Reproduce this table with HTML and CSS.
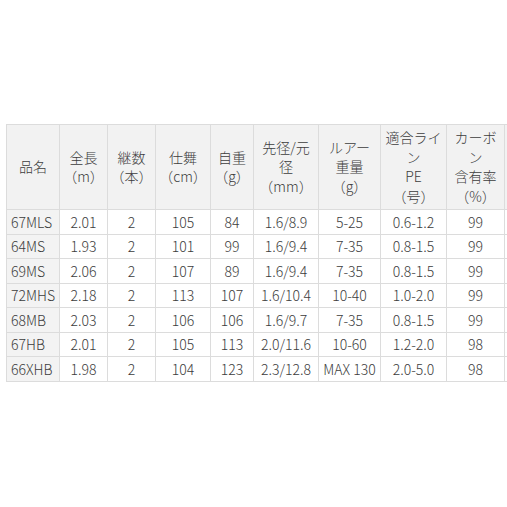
FILE: index.html
```html
<!DOCTYPE html>
<html lang="ja">
<head>
<meta charset="utf-8">
<link rel="stylesheet" href="styles.css">
</head>
<body>
<div class="wrap">
<table class="spec">
<colgroup>
<col class="c1"><col class="c2"><col class="c3"><col class="c4"><col class="c5"><col class="c6"><col class="c7"><col class="c8"><col class="c9"><col class="c10">
</colgroup>
<thead>
<tr>
<th>品名</th>
<th>全長<br>（m）</th>
<th>継数<br>（本）</th>
<th>仕舞<br>（cm）</th>
<th>自重<br>（g）</th>
<th>先径/元<br>径<br>（mm）</th>
<th>ルアー<br>重量<br>（g）</th>
<th>適合ライ<br>ン<br>PE<br>（号）</th>
<th>カーボ<br>ン<br>含有率<br>（%）</th>
<th></th>
</tr>
</thead>
<tbody>
<tr><th>67MLS</th><td>2.01</td><td>2</td><td>105</td><td>84</td><td>1.6/8.9</td><td>5-25</td><td>0.6-1.2</td><td>99</td><td></td></tr>
<tr><th>64MS</th><td>1.93</td><td>2</td><td>101</td><td>99</td><td>1.6/9.4</td><td>7-35</td><td>0.8-1.5</td><td>99</td><td></td></tr>
<tr><th>69MS</th><td>2.06</td><td>2</td><td>107</td><td>89</td><td>1.6/9.4</td><td>7-35</td><td>0.8-1.5</td><td>99</td><td></td></tr>
<tr><th>72MHS</th><td>2.18</td><td>2</td><td>113</td><td>107</td><td>1.6/10.4</td><td>10-40</td><td>1.0-2.0</td><td>99</td><td></td></tr>
<tr><th>68MB</th><td>2.03</td><td>2</td><td>106</td><td>106</td><td>1.6/9.7</td><td>7-35</td><td>0.8-1.5</td><td>99</td><td></td></tr>
<tr><th>67HB</th><td>2.01</td><td>2</td><td>105</td><td>113</td><td>2.0/11.6</td><td>10-60</td><td>1.2-2.0</td><td>98</td><td></td></tr>
<tr><th>66XHB</th><td>1.98</td><td>2</td><td>104</td><td>123</td><td>2.3/12.8</td><td>MAX 130</td><td>2.0-5.0</td><td>98</td><td></td></tr>
</tbody>
</table>
</div>
</body>
</html>
```
FILE: styles.css
```css
html, body {
  margin: 0;
  padding: 0;
  background: #ffffff;
  overflow: hidden;
}
.wrap {
  padding: 124px 0 0 6px;
  width: 600px;
}
.spec {
  border-collapse: collapse;
  table-layout: fixed;
  width: 558px;
  font-family: "Noto Sans CJK JP", "Noto Sans", sans-serif;
  font-size: 14px;
  font-weight: 300;
  color: #3c3c3c;
}
.c1 { width: 53px; }
.c2 { width: 48px; }
.c3 { width: 48px; }
.c4 { width: 55px; }
.c5 { width: 43px; }
.c6 { width: 65px; }
.c7 { width: 62px; }
.c8 { width: 66px; }
.c9 { width: 58px; }
.c10 { width: 60px; }
.spec th, .spec td {
  border: 1px solid #dcdcdc;
  padding: 0 2px;
  text-align: center;
  vertical-align: middle;
  font-weight: 300;
  white-space: nowrap;
  overflow: hidden;
}
.spec thead th {
  background: #f2f2f2;
  height: 84px;
  line-height: 19.5px;
}
.spec tbody th {
  background: #f3f3f3;
  text-align: left;
  padding-left: 4px;
}
.spec tbody tr {
  height: 24.5px;
}
.spec tbody td, .spec tbody th {
  line-height: 20px;
}
```
